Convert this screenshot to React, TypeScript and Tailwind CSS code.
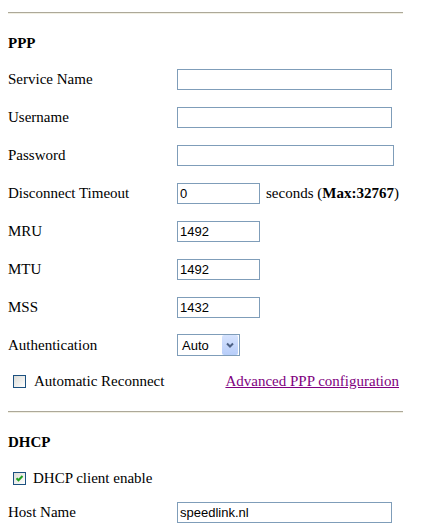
import React from "react";

function Field({ label, value = "", width, children }: { label: string; value?: string; width: string; children?: React.ReactNode }) {
  return (
    <div className="flex h-[21px] items-center">
      <span className="w-[169px] shrink-0">{label}</span>
      <input
        readOnly
        defaultValue={value}
        className={`${width} h-[21px] border border-[#7f9db9] bg-white px-[2px] font-[Liberation_Sans,Arial,sans-serif] text-[13px] text-black outline-none`}
      />
      {children}
    </div>
  );
}

function CheckBox({ checked }: { checked?: boolean }) {
  return (
    <span className="relative flex h-[13px] w-[13px] shrink-0 items-center justify-center border border-[#1c5180] bg-gradient-to-br from-[#dcdcd7] to-white">
      {checked && (
        <svg width="9" height="9" viewBox="0 0 9 9">
          <path d="M1.5 4.2 L3.5 6.3 L7.5 2" fill="none" stroke="#21a121" strokeWidth="2" />
        </svg>
      )}
    </span>
  );
}

function Rule() {
  return <div className="border-t border-b border-t-[#aca899] border-b-[#f1efe2]" />;
}

export default function App() {
  return (
    <div className="h-[531px] w-[425px] overflow-hidden bg-white pl-2 pr-[22px] pt-3 font-[Liberation_Serif,Times_New_Roman,serif] text-[15px] leading-[17px] text-black">
      <Rule />

      {/* PPP */}
      <h2 className="mt-[21px] font-bold">PPP</h2>
      <div className="mt-[17px] flex flex-col gap-[17px]">
        <Field label="Service Name" width="w-[215px]" />
        <Field label="Username" width="w-[215px]" />
        <Field label="Password" width="w-[217px]" />
        <Field label="Disconnect Timeout" value="0" width="w-[83px]">
          <span className="ml-[6px]">
            seconds (<b>Max:32767</b>)
          </span>
        </Field>
        <Field label="MRU" value="1492" width="w-[83px]" />
        <Field label="MTU" value="1492" width="w-[83px]" />
        <Field label="MSS" value="1432" width="w-[83px]" />
      </div>

      <div className="mt-4 flex h-[22px] items-center">
        <span className="w-[169px] shrink-0">Authentication</span>
        <div className="flex h-[22px] w-[63px] items-center border border-[#7f9db9] bg-white">
          <span className="flex-1 pl-[4px] font-[Liberation_Sans,Arial,sans-serif] text-[13px]">Auto</span>
          <span className="mr-px flex h-[20px] w-[16px] items-center justify-center rounded-[2px] bg-gradient-to-b from-[#d6e3fe] to-[#b7cdf9]">
            <svg width="8" height="6" viewBox="0 0 8 6">
              <path d="M1 1.5 L4 4.5 L7 1.5" fill="none" stroke="#4d6185" strokeWidth="2" />
            </svg>
          </span>
        </div>
      </div>

      <div className="mt-[19px] flex h-[13px] items-center">
        <span className="ml-[5px]">
          <CheckBox />
        </span>
        <span className="ml-[8px]">Automatic Reconnect</span>
        <a href="#" className="ml-auto mr-[4px] text-[#800080] underline">
          Advanced PPP configuration
        </a>
      </div>

      <div className="mt-[23px]">
        <Rule />
      </div>

      {/* DHCP */}
      <h2 className="mt-[21px] font-bold">DHCP</h2>
      <div className="mt-[21px] flex h-[13px] items-center">
        <span className="ml-[5px]">
          <CheckBox checked />
        </span>
        <span className="ml-[7px]">DHCP client enable</span>
      </div>
      <div className="mt-[17px]">
        <Field label="Host Name" value="speedlink.nl" width="w-[215px]" />
      </div>
    </div>
  );
}
